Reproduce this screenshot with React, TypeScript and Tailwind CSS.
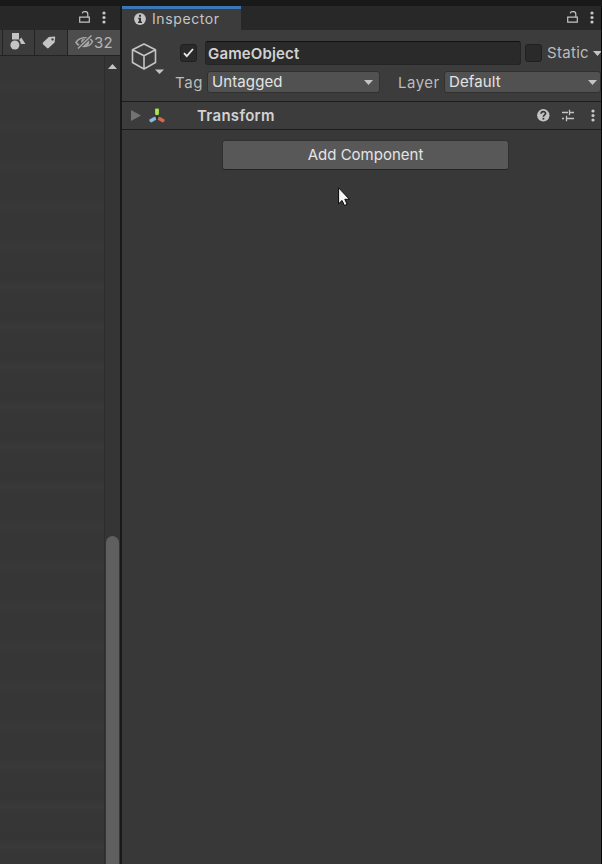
import React from "react";

const DOTS = [2, 6.5, 11];

function Kebab() {
  return (
    <svg className="block h-[13px] w-1 shrink-0" viewBox="0 0 4 13" fill="#c8c8c8">
      {DOTS.map((y) => (
        <circle key={y} cx="2" cy={y} r="1.6" />
      ))}
    </svg>
  );
}

function Lock() {
  return (
    <svg className="block h-3 w-[11px] shrink-0" viewBox="0 0 11 12" fill="none" stroke="#c4c4c4" strokeWidth="1.2">
      <path d="M.7 6.2h9.6v5H.7zM3.2 2.4C3.5 1 4.4.7 5.4.7h1.1C8.1.7 8.8 1.4 8.8 3v3" />
    </svg>
  );
}

function Caret({ className = "" }: { className?: string }) {
  return (
    <svg className={`block h-[5px] w-[9px] shrink-0 ${className}`} viewBox="0 0 9 5" fill="#c4c4c4">
      <path d="M0 0h9L4.5 5z" />
    </svg>
  );
}

function Hierarchy() {
  return (
    <section className="flex w-[120px] shrink-0 flex-col">
      <div className="flex h-6 items-center bg-[#282828] pb-0.5 pl-[79px]">
        <Lock />
        <div className="ml-3"><Kebab /></div>
      </div>
      <div className="flex h-[26px] border-b border-[#232323] bg-[#3c3c3c]">
        <div className="w-[3px] border-r border-[#232323]" />
        <div className="flex w-8 items-center border-r border-[#232323] pb-0.5 pl-[7px]">
          <svg className="h-[17px] w-4" viewBox="0 0 16 17" fill="#c4c4c4">
            <path d="M2 0h7v6.5H2zM11.2 4.5 15.5 11h-4.7C10.6 9 10 7.8 9 7.2z" />
            <circle cx="4.9" cy="12" r="4.5" />
          </svg>
        </div>
        <div className="flex w-[33px] items-center border-r border-[#232323] pb-px pl-[7px]">
          <svg className="h-[13px] w-[14px]" viewBox="0 0 14 13">
            <path fill="#c4c4c4" fillRule="evenodd" d="M6.8 1 12.5.5Q13.3.5 13.2 1.5L12.6 6.4 6.6 12.1Q5.8 12.8 5 12L1 8.2Q.2 7.4 1 6.5zM10.5 2.2a1.2 1.2 0 1 0 .1 0z" />
          </svg>
        </div>
        <div className="flex w-[52px] items-center bg-[#4d4d4d] pl-[7px]">
          <svg className="mb-0.5 h-[14px] w-5 shrink-0" viewBox="0 0 20 14" fill="none" stroke="#a8a8a8" strokeWidth="1.5">
            <path d="M1 7.5C4.5 1.5 14 1.2 17.5 6.5 14.5 13 5 13 1 7.5z" />
            <path d="M8 4.2C5.5 7 7 10.5 10 10.5c3 0 4.5-3 3-6" fill="#a8a8a8" />
            <path d="M16.5.5 3 13.5" stroke="#4d4d4d" strokeWidth="3.5" />
            <path d="M16.5.5 3 13.5" />
          </svg>
          <span className="-ml-px text-[15px] leading-5 tracking-[0.3px] text-[#b5b5b5]">32</span>
        </div>
      </div>
      <div className="flex min-h-0 flex-1">
        <div className="w-[104px] bg-[repeating-linear-gradient(to_bottom,#363636_0px,#353535_22px,#373737_26px,#393939_31px,#373737_34px,#363636_40px)]" />
        <div className="flex w-4 flex-col border-l border-[#2d2d2d] bg-[#353535] pl-px">
          <Caret className="mt-2 ml-0.5 rotate-180" />
          <div className="mt-[467px] w-[13px] flex-1 rounded-t-full bg-[#5f5f5f]" />
        </div>
      </div>
    </section>
  );
}

function Select({ label, className }: { label: string; className: string }) {
  return (
    <div className={`flex h-[22px] items-center justify-between rounded-[3px] border border-[#303030] bg-[#515151] ${className}`}>
      <span className="text-[15px] leading-5 tracking-[0.1px] text-[#e4e4e4]">{label}</span>
      <Caret className="mt-px" />
    </div>
  );
}

function ObjectHeader() {
  return (
    <header className="flex h-[71px] bg-[#3c3c3c]">
      <div className="w-[54px] shrink-0 pt-[13px] pl-[9px]">
        <svg className="h-9 w-9" viewBox="0 0 36 36" fill="none" stroke="#c4c4c4" strokeWidth="1.6" strokeLinejoin="round">
          <path d="M13 1 24.5 6.7V19.5L13 26 1.5 19.5V6.7zM1.5 6.7 13 12.8 24.5 6.7M13 12.8V26" />
          <path d="M24 26.5h9L28.5 31z" fill="#c4c4c4" stroke="none" />
        </svg>
      </div>
      <div className="min-w-0 flex-1">
        <div className="mt-[11px] flex h-6 items-center">
          <div className="ml-1 flex h-[18px] w-[17px] shrink-0 items-center justify-center rounded-[3px] border border-[#202020] bg-[#2a2a2a]">
            <svg className="h-[10px] w-[11px]" viewBox="0 0 11 10" fill="none" stroke="#e8e8e8" strokeWidth="1.8">
              <path d="m1 5.2 2.8 3L10 1" />
            </svg>
          </div>
          <div className="ml-2 flex h-6 w-[316px] shrink-0 items-center rounded-[3px] border border-[#242424] border-t-[#111] bg-[#2a2a2a] pt-0.5 pl-0.5 text-[15px] font-semibold tracking-[0.15px] text-[#d2d2d2]">
            GameObject
          </div>
          <div className="ml-1 h-[18px] w-[17px] shrink-0 rounded-[3px] border border-[#202020] bg-[#2a2a2a]" />
          <span className="ml-[5px] text-[15px] tracking-[0.3px] text-[#bbb]">Static</span>
          <Caret className="ml-1" />
        </div>
        <div className="mt-1.5 flex h-[22px] items-center text-[15px] text-[#bbb]">
          <span className="-ml-px w-8 pt-0.5 tracking-[0.6px]">Tag</span>
          <Select label="Untagged" className="w-[173px] pr-1.5 pl-1" />
          <span className="ml-[18px] w-[46px] pt-0.5 tracking-[0.5px]">Layer</span>
          <Select label="Default" className="w-[157px] shrink-0 pr-[3px] pl-1" />
        </div>
      </div>
    </header>
  );
}

function TransformRow() {
  return (
    <div className="flex h-[29px] items-center border-y border-[#1c1c1c] bg-[#3c3c3c] pl-[9px]">
      <svg className="h-[11px] w-[10px]" viewBox="0 0 10 11" fill="#737373"><path d="M0 0v11l10-5.5z" /></svg>
      <svg className="ml-2 h-4 w-4" viewBox="0 0 16 16">
        <path d="M8 6.5v2.8L5 11M8 9.3l3 1.7" fill="none" stroke="#292929" strokeWidth="1.2" />
        <path d="M6.1.8Q8 0 9.9.8V6.2Q8 8.2 6.1 6.2z" fill="#aae650" />
        <path d="M6.5 8.8 7.1 11.7 2.3 14.6Q.2 14 .2 11.8L4.4 9.2z" fill="#83bce3" />
        <path d="M9.5 8.8 8.9 11.7l4.8 2.9q2.1-.6 2.1-2.8L11.6 9.2z" fill="#d06a4b" />
      </svg>
      <span className="ml-8 pt-px text-[15px] font-semibold tracking-[0.3px] text-[#d2d2d2]">Transform</span>
      <div className="ml-auto flex items-center pr-1.5">
        <svg className="h-[13px] w-[13px]" viewBox="0 0 13 13">
          <circle cx="6.3" cy="6.3" r="6.2" fill="#c4c4c4" />
          <path d="M4.1 4.8C4.1 1.9 8.6 2 8.6 4.5 8.6 6 6.4 5.9 6.4 7.8" fill="none" stroke="#353535" strokeWidth="1.7" />
          <path d="M5.5 8.8h1.8v1.8H5.5z" fill="#353535" />
        </svg>
        <svg className="mr-[17px] ml-3 h-[13px] w-3" viewBox="0 0 12 13" fill="none" stroke="#c4c4c4" strokeWidth="1.3">
          <path d="M0 3.5h6M7.5 3.5H12M7.5.8v5.5M0 9.5h2M4.5 9.5H12M4.5 6.8v5.5" />
        </svg>
        <Kebab />
      </div>
    </div>
  );
}

function Inspector() {
  return (
    <section className="flex w-[479px] flex-col overflow-hidden">
      <div className="flex h-6 bg-[#282828]">
        <div className="flex w-[119px] items-center border-t-[3px] border-[#3977b9] bg-[#3c3c3c] pb-0.5 pl-3">
          <svg className="h-3 w-3" viewBox="0 0 12 12">
            <circle cx="6" cy="6" r="5.9" fill="#c4c4c4" />
            <path d="M5 1.8h2v2H5zM4.2 4.8H7v3.8h1V10H4V8.6h1V6.2h-.8z" fill="#333" />
          </svg>
          <span className="ml-1.5 text-[14px] tracking-[0.6px] text-[#c5c5c5]">Inspector</span>
        </div>
        <div className="ml-auto flex items-center pr-[7px] pb-0.5">
          <Lock />
          <div className="ml-3"><Kebab /></div>
        </div>
      </div>
      <ObjectHeader />
      <TransformRow />
      <button className="mt-2.5 ml-[100px] h-[30px] w-[287px] rounded-[3px] border border-[#303030] border-b-[#222] bg-[#585858] text-[15px] leading-5 text-[#e4e4e4]">
        Add Component
      </button>
    </section>
  );
}

export default function App() {
  return (
    <main className="relative flex h-[864px] w-[602px] overflow-hidden border-t-[6px] border-[#191919] bg-[#383838] font-['Inter','Liberation_Sans',sans-serif]">
      <Hierarchy />
      <div className="w-0.5 shrink-0 bg-[#191919]" />
      <Inspector />
      <div className="w-px bg-[#080808]" />
      <svg className="absolute top-[181px] left-[338px] h-5 w-3" viewBox="0 0 12 20">
        <path d="M.6.8v16L4 13.5l2.5 5 2.6-1.2-2.3-5h4.6z" fill="#f5f5f5" stroke="#080808" />
      </svg>
    </main>
  );
}
